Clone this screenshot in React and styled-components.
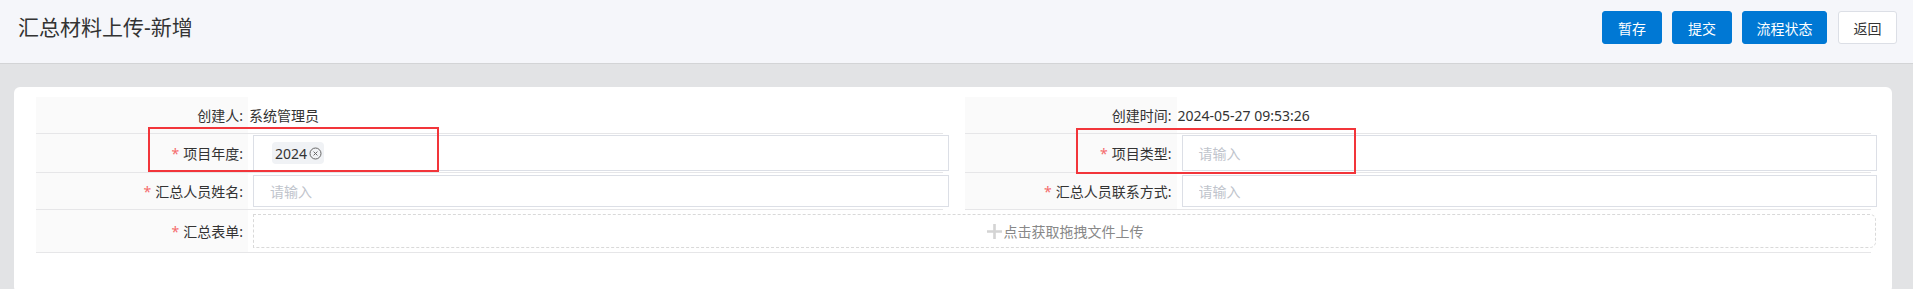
import React from 'react';
import styled, { createGlobalStyle } from 'styled-components';

const GlobalStyle = createGlobalStyle`
  html, body {
    margin: 0;
    padding: 0;
  }
  body {
    background: #e2e3e5;
    font-family: "Microsoft YaHei", "Noto Sans", "Noto Sans CJK SC", sans-serif;
    color: #333;
    min-height: 289px;
  }
`;

const Header = styled.header`
  display: flex;
  justify-content: space-between;
  align-items: flex-start;
  height: 64px;
  padding: 11px 16px 0 18px;
  box-sizing: border-box;
  background: #f5f6fa;
  border-bottom: 1px solid #d3d4d6;
`;

const Title = styled.h1`
  margin: 0;
  font-size: 21px;
  font-weight: normal;
  line-height: 33px;
  color: #333;
`;

const Actions = styled.div`
  display: flex;
  gap: 10px;
`;

const Button = styled.button`
  height: 33px;
  min-width: ${p => p.$w || 60}px;
  padding: 0 12px;
  box-sizing: border-box;
  border-radius: 3px;
  border: 1px solid ${p => (p.$plain ? '#dcdfe6' : '#0078d4')};
  background: ${p => (p.$plain ? '#fff' : '#0078d4')};
  color: ${p => (p.$plain ? '#333' : '#fff')};
  font-family: inherit;
  font-size: 14px;
  cursor: pointer;
  margin-left: ${p => (p.$plain ? 1 : 0)}px;
`;

const Main = styled.main`
  padding: 23px 21px 0 14px;
`;

const Card = styled.section`
  position: relative;
  background: #fff;
  border-radius: 6px;
  padding: 10px 21px 40px 22px;
`;

const Grid = styled.div`
  display: grid;
  grid-template-columns: 1fr 1fr;
  column-gap: 22px;
`;

const Item = styled.div`
  display: flex;
  grid-column: ${p => (p.$full ? '1 / -1' : 'auto')};
  border-bottom: 1px solid #e6e6e8;
`;

const Label = styled.div`
  flex: 0 0 212px;
  min-height: 36px;
  box-sizing: border-box;
  display: flex;
  align-items: center;
  justify-content: flex-end;
  padding-right: 5px;
  background: #fafafa;
  font-size: 14px;
  color: #333;
`;

const Star = styled.span`
  color: #f56c6c;
  margin-right: 4px;
`;

const Value = styled.div`
  flex: 1;
  min-width: 0;
  display: flex;
  align-items: center;
  padding: ${p => p.$pad || '1px'} 0 ${p => p.$pad || '1px'} ${p => (p.$text ? 1 : 5)}px;
  font-size: 14px;
  color: #333;
`;

const SelectBox = styled.div`
  flex-shrink: 0;
  width: calc(100% + 6px);
  height: 36px;
  box-sizing: border-box;
  border: 1px solid #dcdfe6;
  display: flex;
  align-items: center;
  padding-left: ${p => (p.$empty ? 16 : 18)}px;
  background: #fff;
`;

const Placeholder = styled.span`
  font-size: 14px;
  color: #c0c4cc;
`;

const Tag = styled.span`
  display: inline-flex;
  align-items: center;
  gap: 2px;
  height: 22px;
  padding: 0 2px 0 3px;
  border-radius: 4px;
  background: #f0f2f5;
  font-size: 14px;
  color: #333;
`;

const Input = styled.input`
  flex-shrink: 0;
  width: calc(100% + 6px);
  height: 32px;
  box-sizing: border-box;
  border: 1px solid #dcdfe6;
  border-radius: 0;
  padding: 0 0 0 16px;
  font-family: inherit;
  font-size: 14px;
  color: #333;
  outline: none;
  &::placeholder {
    color: #c0c4cc;
  }
`;

const Upload = styled.div`
  flex-shrink: 0;
  width: calc(100% + 5px);
  height: 34px;
  box-sizing: border-box;
  border: 1px dashed #d9d9d9;
  border-radius: 0 6px 6px 0;
  display: flex;
  align-items: center;
  justify-content: center;
  gap: 1px;
  font-size: 14px;
  color: #888;
`;

const Mark = styled.div`
  position: absolute;
  left: ${p => p.$x}px;
  top: ${p => p.$y}px;
  width: ${p => p.$w}px;
  height: ${p => p.$h}px;
  box-sizing: border-box;
  border: 2px solid #f2353a;
  pointer-events: none;
`;

const CloseIcon = () => (
  <svg width="13" height="13" viewBox="0 0 13 13">
    <circle cx="6.5" cy="6.5" r="5.5" fill="none" stroke="#666" strokeWidth="1" />
    <path d="M4.6 4.6 L8.4 8.4 M8.4 4.6 L4.6 8.4" stroke="#666" strokeWidth="1" />
  </svg>
);

const PlusIcon = () => (
  <svg width="17" height="17" viewBox="0 0 17 17">
    <path d="M8.5 1 V16 M1 8.5 H16" stroke="#d4d4d4" strokeWidth="2.6" />
  </svg>
);

const Field = ({ label, required, children, ...rest }) => (
  <Item {...rest}>
    <Label>
      {required && <Star>*</Star>}
      {label}:
    </Label>
    {children}
  </Item>
);

export default function App() {
  return (
    <>
      <GlobalStyle />
      <Header>
        <Title>汇总材料上传-新增</Title>
        <Actions>
          <Button>暂存</Button>
          <Button>提交</Button>
          <Button $w={85}>流程状态</Button>
          <Button $plain $w={59}>返回</Button>
        </Actions>
      </Header>
      <Main>
        <Card>
          <Grid>
            <Field label="创建人">
              <Value $text>系统管理员</Value>
            </Field>
            <Field label="创建时间">
              <Value $text>2024-05-27 09:53:26</Value>
            </Field>
            <Field label="项目年度" required>
              <Value>
                <SelectBox>
                  <Tag>
                    2024
                    <CloseIcon />
                  </Tag>
                </SelectBox>
              </Value>
            </Field>
            <Field label="项目类型" required>
              <Value>
                <SelectBox $empty>
                  <Placeholder>请输入</Placeholder>
                </SelectBox>
              </Value>
            </Field>
            <Field label="汇总人员姓名" required>
              <Value>
                <Input placeholder="请输入" />
              </Value>
            </Field>
            <Field label="汇总人员联系方式" required>
              <Value>
                <Input placeholder="请输入" />
              </Value>
            </Field>
            <Field label="汇总表单" required $full>
              <Value $pad="4px">
                <Upload>
                  <PlusIcon />
                  点击获取拖拽文件上传
                </Upload>
              </Value>
            </Field>
          </Grid>
          <Mark $x={134} $y={40} $w={291} $h={45} />
          <Mark $x={1062} $y={41} $w={280} $h={46} />
        </Card>
      </Main>
    </>
  );
}
